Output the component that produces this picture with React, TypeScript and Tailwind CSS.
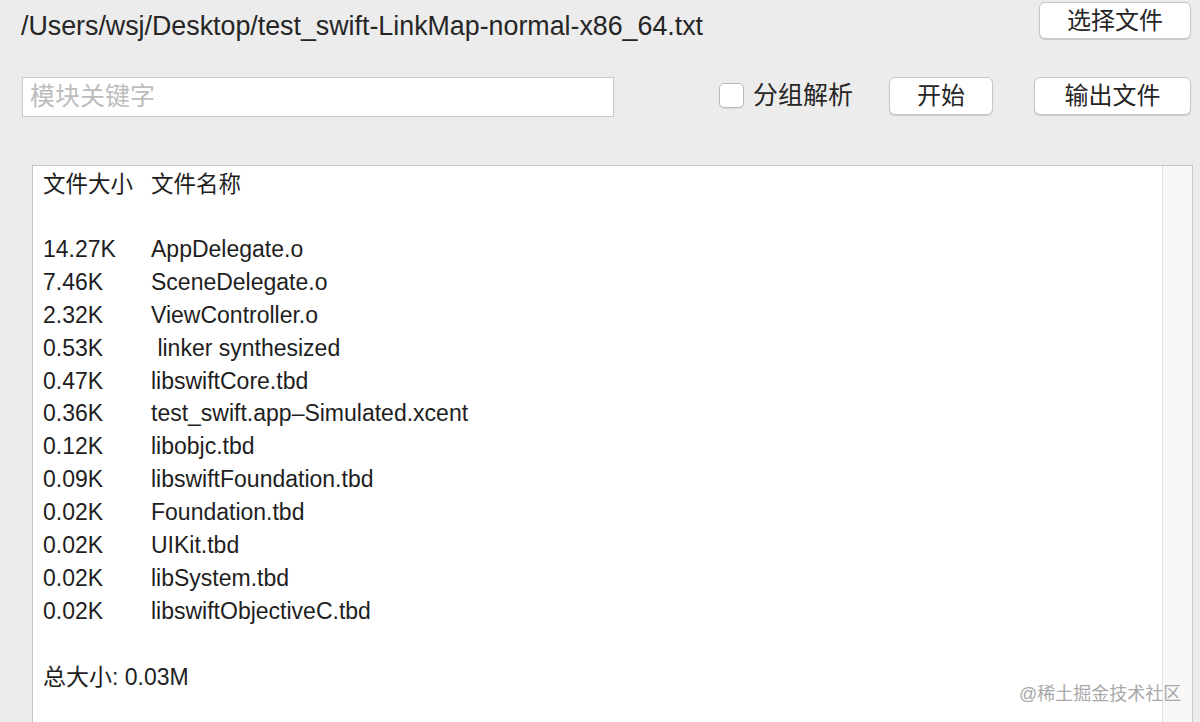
import React from "react";

const rows: [string, string][] = [
  ["14.27K", "AppDelegate.o"],
  ["7.46K", "SceneDelegate.o"],
  ["2.32K", "ViewController.o"],
  ["0.53K", "\u00a0linker synthesized"],
  ["0.47K", "libswiftCore.tbd"],
  ["0.36K", "test_swift.app\u2013Simulated.xcent"],
  ["0.12K", "libobjc.tbd"],
  ["0.09K", "libswiftFoundation.tbd"],
  ["0.02K", "Foundation.tbd"],
  ["0.02K", "UIKit.tbd"],
  ["0.02K", "libSystem.tbd"],
  ["0.02K", "libswiftObjectiveC.tbd"],
];

const font = "font-['Liberation_Sans','Noto_Sans_CJK_SC',sans-serif]";

function MacButton({ label, className }: { label: string; className: string }) {
  return (
    <button
      className={`flex items-center justify-center rounded-[6px] border border-[#c6c6c6] bg-white text-[24px] text-[#262626] shadow-[0_1px_1px_rgba(0,0,0,0.15)] ${className}`}
    >
      {label}
    </button>
  );
}

export default function App() {
  return (
    <div className={`relative flex h-[722px] w-[1200px] flex-col overflow-hidden bg-[#ececec] ${font}`}>
      {/* Row 1 */}
      <div className="flex items-start justify-between pl-[21px] pr-[9px] pt-[2px]">
        <div className="mt-[8px] text-[26.8px] leading-[32px] text-[#262626]">
          /Users/wsj/Desktop/test_swift-LinkMap-normal-x86_64.txt
        </div>
        <MacButton label="选择文件" className="h-[37px] w-[152px]" />
      </div>

      {/* Row 2 */}
      <div className="mt-[35px] flex items-center">
        <div className="ml-[22px] flex h-[40px] w-[592px] items-center border border-[#c9c9c9] bg-white pl-[7px] text-[25px] text-[#bdbdbd]">
          模块关键字
        </div>
        <div className="-mt-[3px] ml-[105px] h-[25px] w-[25px] rounded-[5px] border border-[#b9b9b9] bg-white shadow-[0_1px_1px_rgba(0,0,0,0.08)]" />
        <span className="-mt-[2px] ml-[9px] text-[25px] text-[#262626]">分组解析</span>
        <MacButton label="开始" className="-mt-[2px] ml-[36px] h-[38px] w-[104px]" />
        <MacButton label="输出文件" className="-mt-[2px] ml-[41px] h-[38px] w-[157px]" />
      </div>

      {/* Text area */}
      <div className="ml-[32px] mt-[48px] flex w-[1161px] flex-1 border-l border-t border-r border-[#c8c8c8] bg-white">
        <div className="flex-1 pl-[10px] pt-[3px] text-[23px] leading-[32.9px] text-[#1e1e1e]">
          <div className="flex">
            <span className="w-[108px] text-[22.5px]">文件大小</span>
            <span className="text-[22.5px]">文件名称</span>
          </div>
          <div className="h-[31px]" />
          {rows.map(([size, name], i) => (
            <div key={i} className="flex whitespace-pre">
              <span className="w-[108px]">{size}</span>
              <span>{name}</span>
            </div>
          ))}
          <div className="h-[32.9px]" />
          <div>总大小: 0.03M</div>
        </div>
        <div className="w-[30px] border-l border-[#e2e2e2] bg-[#f8f8f8]" />
      </div>

      {/* Watermark */}
      <div className="absolute left-[1019px] top-[681px] text-[18px] leading-[26px] text-[#a8a8a8]">
        @稀土掘金技术社区
      </div>
    </div>
  );
}
